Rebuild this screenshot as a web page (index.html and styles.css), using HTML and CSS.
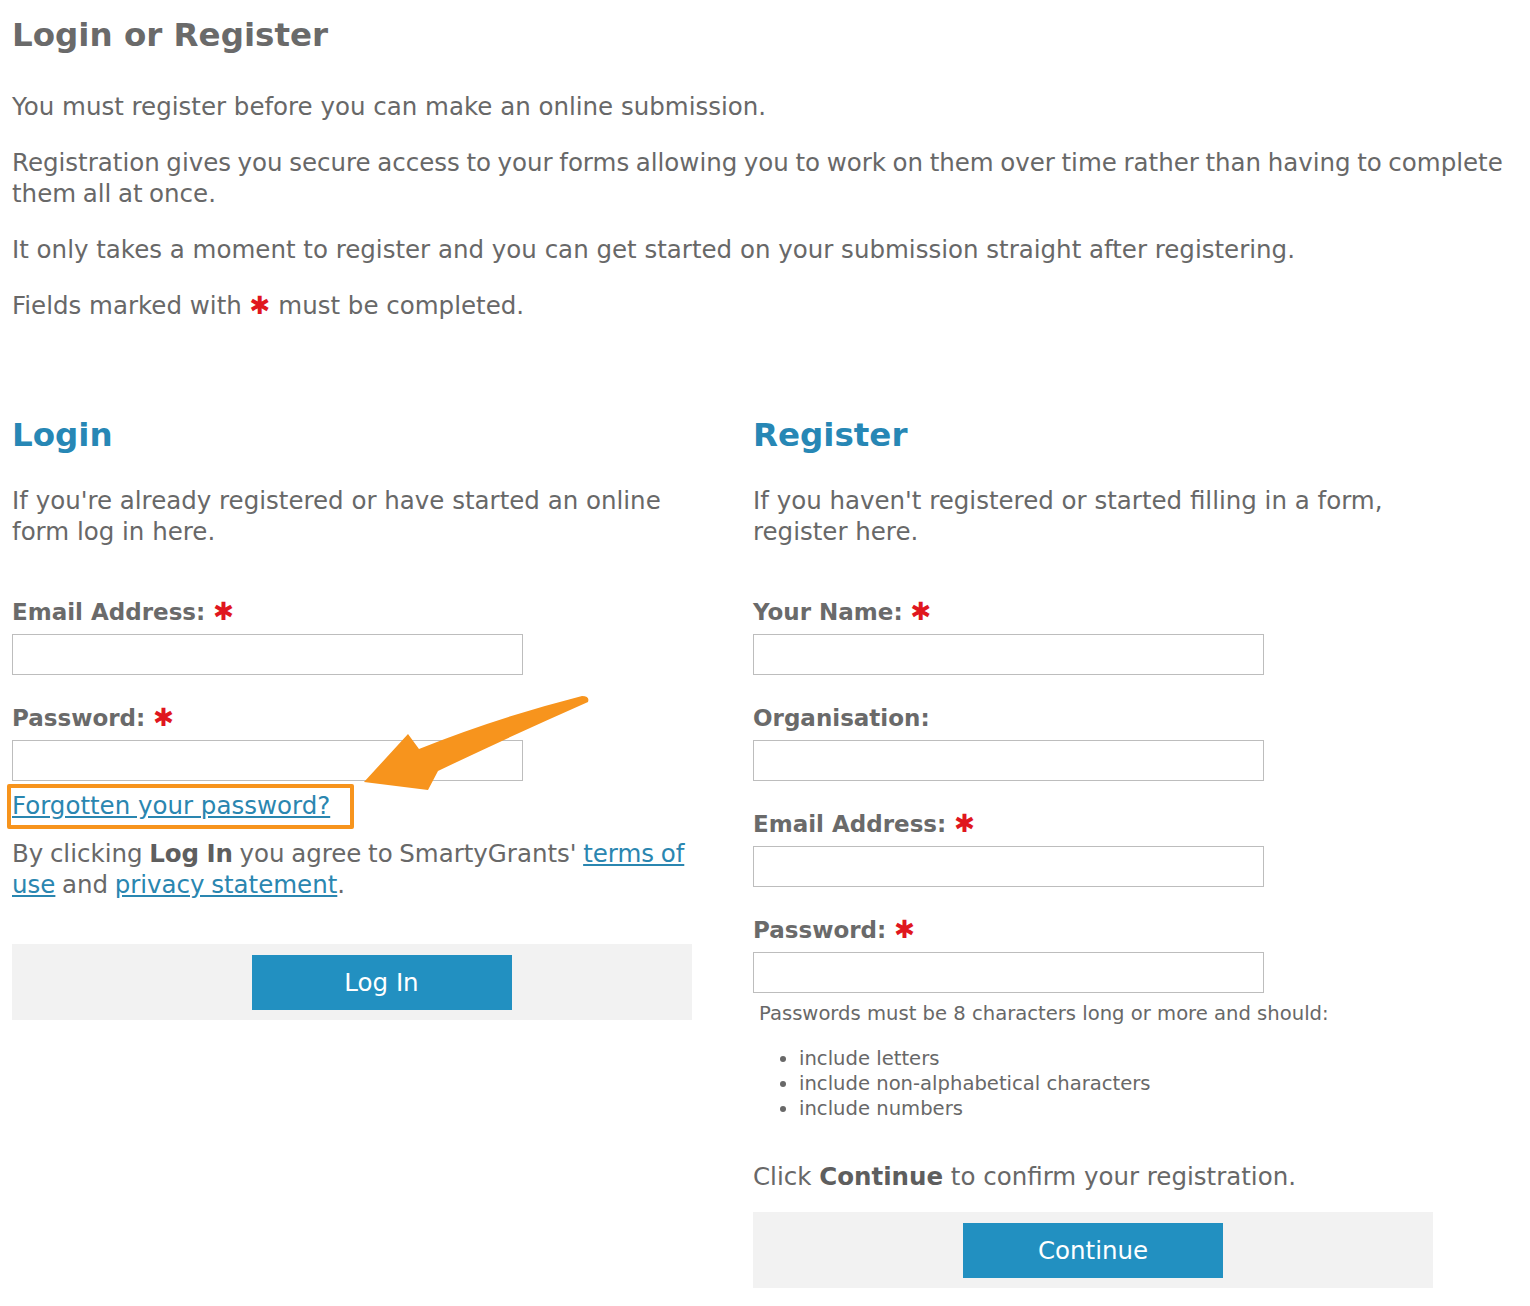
FILE: index.html
```html
<!DOCTYPE html>
<html>
<head>
<meta charset="UTF-8">
<title>Login or Register</title>
<link rel="stylesheet" href="styles.css">
</head>
<body>
<div class="page">
  <h1 class="page-title">Login or Register</h1>
  <p>You must register before you can make an online submission.</p>
  <p class="tight">Registration gives you secure access to your forms allowing you to work on them over time rather than having to complete them all at once.</p>
  <p>It only takes a moment to register and you can get started on your submission straight after registering.</p>
  <p>Fields marked with <span class="req">&#10033;</span> must be completed.</p>

  <div class="columns">
    <div class="col">
      <h2>Login</h2>
      <p class="intro">If you're already registered or have started an online form log in here.</p>
      <div class="field">
        <label>Email Address: <span class="req">&#10033;</span></label>
        <input type="text">
      </div>
      <div class="field">
        <label>Password: <span class="req">&#10033;</span></label>
        <input type="password">
      </div>
      <div class="forgot">
        <a href="#" class="forgot-link">Forgotten your password?</a>
        <svg class="arrow" width="260" height="110" viewBox="0 0 260 110">
          <path d="M8,92 L52,44 L63,59 Q140,28 226,6 Q234,6 232,12 Q155,46 82,81 L72,100 Z" fill="#f7941d"/>
        </svg>
      </div>
      <p class="agree tight">By clicking <b>Log In</b> you agree to SmartyGrants' <a href="#">terms of</a><br><a href="#">use</a> and <a href="#">privacy statement</a>.</p>
      <div class="actions login"><button>Log In</button></div>
    </div>

    <div class="col">
      <h2>Register</h2>
      <p class="intro">If you haven't registered or started filling in a form, register here.</p>
      <div class="field">
        <label>Your Name: <span class="req">&#10033;</span></label>
        <input type="text">
      </div>
      <div class="field">
        <label>Organisation:</label>
        <input type="text">
      </div>
      <div class="field">
        <label>Email Address: <span class="req">&#10033;</span></label>
        <input type="text">
      </div>
      <div class="field last">
        <label>Password: <span class="req">&#10033;</span></label>
        <input type="password">
      </div>
      <p class="hint">Passwords must be 8 characters long or more and should:</p>
      <ul class="rules">
        <li>include letters</li>
        <li>include non-alphabetical characters</li>
        <li>include numbers</li>
      </ul>
      <p class="confirm">Click <b>Continue</b> to confirm your registration.</p>
      <div class="actions"><button>Continue</button></div>
    </div>
  </div>
</div>
</body>
</html>
```

FILE: styles.css
```css
body { margin: 0; font-family: "DejaVu Sans", Verdana, sans-serif; color: #686868; background: #fff; }
.page { padding: 0 0 0 12px; }
p { margin: 0 0 25px 0; font-size: 24.5px; line-height: 31px; }
p.tight { word-spacing: -1.2px; }
.page-title { margin: 15px 0 36px 0; font-size: 32.5px; line-height: 40px; color: #6a6a6a; font-weight: bold; }
.req { color: #e0161e; font-weight: bold; font-size: 25px; line-height: 1; }

.columns { display: grid; grid-template-columns: 680px 680px; column-gap: 61px; margin-top: 94px; }
.col h2 { margin: 0 0 30px 0; font-size: 32.5px; line-height: 40px; color: #2787b5; }
.col .intro { margin-bottom: 50px; }

.field { margin-bottom: 28px; }
.field label { display: block; font-size: 23px; line-height: 31px; font-weight: bold; color: #6a6a6a; margin-bottom: 6px; }
.field input { display: block; width: 511px; height: 41px; box-sizing: border-box; border: 1px solid #bdbdbd; margin: 0; padding: 4px 8px; font-size: 18px; }
.field.last { margin-bottom: 8px; }

.forgot { position: relative; margin: -25px 0 9px -5px; }
.forgot-link { display: inline-block; border: 4px solid #f7941d; padding: 2px 20px 4px 1px; font-size: 24.5px; line-height: 31px; color: #2a86b0; border-radius: 2px; }
.arrow { position: absolute; left: 349px; top: -94px; }

.agree { margin-bottom: 44px; }
a { color: #2a86b0; text-underline-offset: 2px; }
b { color: #5e5e5e; }

.actions { background: #f2f2f2; height: 76px; display: flex; justify-content: center; align-items: center; }
.actions.login { padding-left: 59px; }
.actions button { width: 260px; height: 55px; background: #2290c1; color: #fff; border: 0; font-family: "DejaVu Sans", Verdana, sans-serif; font-size: 24.5px; }

.hint { font-size: 19.6px; line-height: 25px; margin: 0 0 20px 6px; }
.rules { margin: 0 0 40px 0; padding-left: 46px; font-size: 19.6px; line-height: 25px; }
.confirm { margin-bottom: 20px; }
```
